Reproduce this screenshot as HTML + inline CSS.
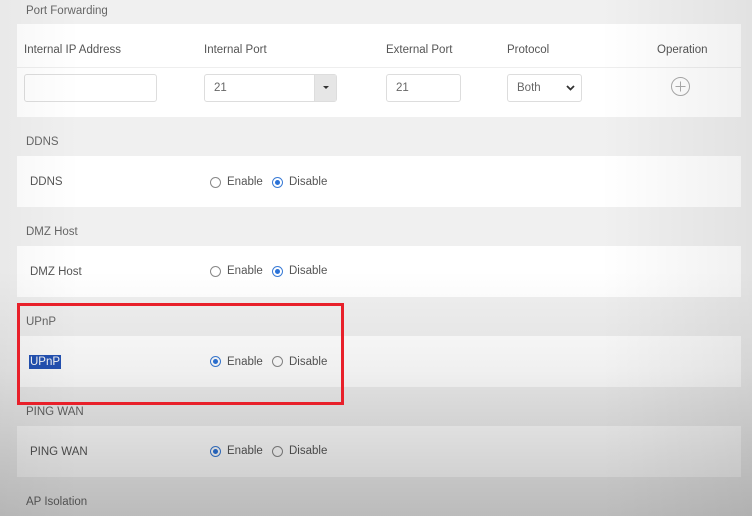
<!DOCTYPE html>
<html><head><style>
*{margin:0;padding:0;box-sizing:border-box}
body{width:752px;height:516px;background:#f0f0f0;font-family:"Liberation Sans",sans-serif;font-size:11.5px;color:#555;position:relative;overflow:hidden}
.t{position:absolute;left:26px;color:#666;font-size:11.5px}
.card{position:absolute;left:17px;width:724px;background:#fff}
.a{position:absolute}
.inp{position:absolute;height:28px;border:1px solid #ddd;border-radius:3px;background:#fff;padding-left:9px;line-height:26px;color:#666}
.r{position:absolute;width:11px;height:11px;border:1px solid #888;border-radius:50%;background:#fff}
.r.on{border-color:#3a7bd5}
.r.on::after{content:"";position:absolute;left:2px;top:2px;width:5px;height:5px;border-radius:50%;background:#2a72d8}
.ov{position:absolute;left:0;top:0;width:752px;height:516px;pointer-events:none;background:linear-gradient(to bottom,rgba(0,0,0,0) 0,rgba(0,0,0,0) 270px,rgba(0,0,0,0.06) 370px,rgba(0,0,0,0.15) 450px,rgba(0,0,0,0.22) 516px)}
.ov2{position:absolute;left:0;top:0;width:752px;height:516px;pointer-events:none;background:linear-gradient(to right,rgba(0,0,0,0.03),rgba(0,0,0,0) 80px,rgba(0,0,0,0) 600px,rgba(0,0,0,0.06))}
</style></head><body>
<div class="t" style="top:5px">Port Forwarding</div>
<div class="card" style="top:24px;height:93px">
 <div class="a" style="left:7px;top:20px">Internal IP Address</div>
 <div class="a" style="left:187px;top:20px">Internal Port</div>
 <div class="a" style="left:369px;top:20px">External Port</div>
 <div class="a" style="left:490px;top:20px">Protocol</div>
 <div class="a" style="left:640px;top:20px">Operation</div>
 <div class="a" style="left:0;top:43px;width:724px;height:1px;background:#eee"></div>
</div>
<div class="inp" style="left:24px;top:74px;width:133px"></div>
<div class="inp" style="left:204px;top:74px;width:133px">21<div style="position:absolute;right:0;top:0;width:22px;height:26px;background:#e6e6e6;border-left:1px solid #ddd"><div style="position:absolute;left:8px;top:11px;border-left:3px solid transparent;border-right:3px solid transparent;border-top:3px solid #333"></div></div></div>
<div class="inp" style="left:386px;top:74px;width:75px">21</div>
<div class="inp" style="left:507px;top:74px;width:75px">Both<svg style="position:absolute;right:6px;top:10px" width="9" height="6"><path d="M1 1l3.5 3.5L8 1" stroke="#333" stroke-width="1.8" fill="none"/></svg></div>
<svg class="a" style="left:670px;top:76px" width="21" height="21"><circle cx="10.5" cy="10.5" r="9" stroke="#aaa" fill="none"/><path d="M10.5 5.5v10M5.5 10.5h10" stroke="#aaa"/></svg>

<div class="t" style="top:136px">DDNS</div>
<div class="card" style="top:156px;height:51px"><div class="a" style="left:13px;top:20px">DDNS</div></div>
<div class="t" style="top:226px">DMZ Host</div>
<div class="card" style="top:246px;height:51px"><div class="a" style="left:13px;top:20px">DMZ Host</div></div>
<div class="t" style="top:316px">UPnP</div>
<div class="card" style="top:336px;height:51px"><div class="a" style="left:12px;top:19px;background:#2454b8;color:#fff;padding:1px 1px">UPnP</div></div>
<div class="t" style="top:406px">PING WAN</div>
<div class="card" style="top:426px;height:51px"><div class="a" style="left:13px;top:20px">PING WAN</div></div>
<div class="t" style="top:496px">AP Isolation</div>

<div class="r" style="left:210px;top:177px"></div><div class="a" style="left:227px;top:176px">Enable</div>
<div class="r on" style="left:272px;top:177px"></div><div class="a" style="left:289px;top:176px">Disable</div>
<div class="r" style="left:210px;top:266px"></div><div class="a" style="left:227px;top:265px">Enable</div>
<div class="r on" style="left:272px;top:266px"></div><div class="a" style="left:289px;top:265px">Disable</div>
<div class="r on" style="left:210px;top:356px"></div><div class="a" style="left:227px;top:356px">Enable</div>
<div class="r" style="left:272px;top:356px"></div><div class="a" style="left:289px;top:356px">Disable</div>
<div class="r on" style="left:210px;top:446px"></div><div class="a" style="left:227px;top:445px">Enable</div>
<div class="r" style="left:272px;top:446px"></div><div class="a" style="left:289px;top:445px">Disable</div>

<div class="ov"></div><div class="ov2"></div>
<div class="a" style="left:17px;top:303px;width:327px;height:102px;border:3px solid #e8202a"></div>
</body></html>
